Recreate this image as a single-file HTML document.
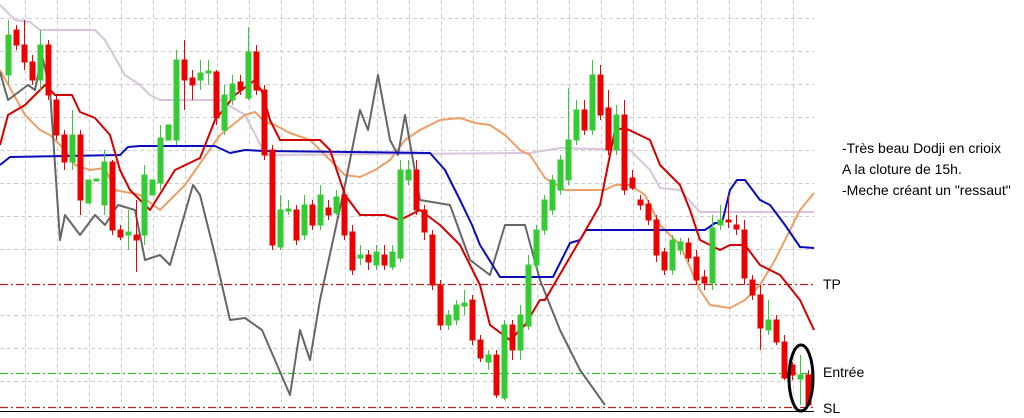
<!DOCTYPE html>
<html><head><meta charset="utf-8"><style>
html,body{margin:0;padding:0;background:#fff;width:1024px;height:418px;overflow:hidden}
svg{display:block}
text{font-family:"Liberation Sans",sans-serif;font-size:14px;fill:#000}
</style></head><body>
<svg width="1024" height="418" viewBox="0 0 1024 418" xmlns="http://www.w3.org/2000/svg">
<g stroke="#cfcfcf" stroke-width="1" stroke-dasharray="4,3">
<path d="M25.5 0V410M57.5 0V410M89.5 0V410M121.5 0V410M153.5 0V410M185.5 0V410M217.5 0V410M249.5 0V410M281.5 0V410M313.5 0V410M345.5 0V410M377.5 0V410M409.5 0V410M441.5 0V410M473.5 0V410M505.5 0V410M537.5 0V410M569.5 0V410M601.5 0V410M633.5 0V410M665.5 0V410M697.5 0V410M729.5 0V410M761.5 0V410M793.5 0V410"/>
<path d="M0 18.5H814M0 51.5H814M0 84.5H814M0 117.5H814M0 150.5H814M0 183.5H814M0 216.5H814M0 249.5H814M0 315.5H814M0 348.5H814M0 381.5H814"/>
</g>
<g stroke-dasharray="8,3,2,3" stroke-width="1.2">
<path d="M0 284.5H814" stroke="#b22"/>
<path d="M0 373.5H814" stroke="#3b3"/>
<path d="M0 407.5H814" stroke="#b22"/>
</g>
<path d="M0 411.5H814" stroke="#000" stroke-width="1"/>
<g fill="none" stroke-width="2" stroke-linejoin="round">
<polyline stroke="#d8c4dc" points="0,5 15,20 30,22 40,30 95,30 105,40 125,75 140,85 150,95 160,100 220,100 245,115 258,140 265,155 530,153 560,148 630,150 650,170 660,188 680,190 700,212 814,212"/>
<polyline stroke="#ee9f68" points="0,70 25,115 40,130 50,135 65,150 75,165 90,170 105,168 115,190 140,195 160,210 185,185 220,135 245,115 255,112 265,122 275,125 290,133 310,140 330,160 345,175 360,177 375,170 390,160 405,140 420,130 440,120 460,118 475,123 490,125 505,135 520,150 530,155 545,178 565,190 605,190 615,185 630,185 645,195 660,225 680,245 700,290 710,305 730,308 745,300 760,285 775,260 785,240 800,210 814,193"/>
<polyline stroke="#666" points="0,72 8,100 28,85 35,90 42,55 50,90 60,240 65,215 80,235 95,215 105,225 118,205 135,210 145,260 160,255 170,265 193,185 200,195 215,255 230,320 245,318 262,330 290,395 300,330 310,360 320,300 345,185 360,110 368,130 378,75 390,140 398,155 405,115 420,200 450,205 470,260 490,275 505,225 525,225 540,280 560,330 580,370 605,405"/>
<polyline stroke="#0b0bbb" points="0,165 10,157 120,155 128,147 140,146 215,146 230,153 245,150 265,151 430,153 445,170 460,200 472,225 480,245 500,277 553,277 570,243 580,240 586,230 705,230 715,223 722,223 730,190 737,180 745,180 760,200 770,205 785,225 800,247 814,248"/>
<polyline stroke="#d40000" points="0,145 8,115 25,105 45,85 55,95 72,95 80,112 95,118 110,135 120,170 130,190 150,210 175,170 200,158 215,120 235,95 255,80 262,92 270,120 280,140 320,140 330,150 345,195 360,215 385,215 400,220 420,210 440,225 460,245 480,285 490,325 510,340 525,325 540,300 545,300 580,240 600,205 615,130 625,128 650,140 660,165 680,185 690,210 700,240 720,250 730,245 745,245 760,265 780,275 800,300 814,330"/>
</g>
<g stroke-width="1">
<g stroke="#3c3" fill="#3c3">
<path d="M8.5 20V85M72.5 110V170M40.5 30V90M104.5 150V215M128.5 210V250M144.5 165V245M160.5 125V190M176.5 50V145M200.5 60V90M208.5 60V85M224.5 85V135M232.5 75V105M248.5 27V100M280.5 195V250M288.5 200V215M304.5 195V240M320.5 185V230M336.5 190V215M360.5 245V265M376.5 245V270M392.5 245V270M400.5 160V262M408.5 160V185M448.5 310V330M456.5 300V325M464.5 290V315M488.5 350V370M504.5 320V400M520.5 305V360M528.5 255V330M536.5 225V270M544.5 195V235M552.5 175V215M560.5 155V195M568.5 88V185M576.5 100V145M592.5 60V135M616.5 105V155M672.5 235V275M680.5 238V255M712.5 215V290M720.5 205V230M768.5 300V335M800.5 355V405"/>
<rect x="6" y="35" width="5" height="40"/><rect x="70" y="135" width="5" height="27"/><rect x="38" y="45" width="5" height="35"/><rect x="86" y="180" width="5" height="23"/><rect x="94" y="179" width="5" height="2"/><rect x="102" y="162" width="5" height="43"/><rect x="126" y="232" width="5" height="3"/><rect x="142" y="175" width="5" height="60"/><rect x="150" y="180" width="5" height="15"/><rect x="158" y="138" width="5" height="45"/><rect x="166" y="125" width="5" height="15"/><rect x="174" y="60" width="5" height="80"/><rect x="198" y="73" width="5" height="7"/><rect x="206" y="71" width="5" height="2"/><rect x="222" y="95" width="5" height="35"/><rect x="230" y="84" width="5" height="16"/><rect x="246" y="52" width="5" height="46"/><rect x="278" y="210" width="5" height="37"/><rect x="286" y="209" width="5" height="2"/><rect x="302" y="205" width="5" height="30"/><rect x="318" y="195" width="5" height="30"/><rect x="334" y="197" width="5" height="16"/><rect x="358" y="255" width="5" height="3"/><rect x="374" y="252" width="5" height="13"/><rect x="390" y="252" width="5" height="15"/><rect x="398" y="170" width="5" height="88"/><rect x="406" y="170" width="5" height="10"/><rect x="446" y="315" width="5" height="10"/><rect x="454" y="305" width="5" height="15"/><rect x="462" y="303" width="5" height="3"/><rect x="486" y="355" width="5" height="7"/><rect x="502" y="325" width="5" height="73"/><rect x="518" y="315" width="5" height="35"/><rect x="526" y="265" width="5" height="61"/><rect x="534" y="230" width="5" height="35"/><rect x="542" y="200" width="5" height="30"/><rect x="550" y="180" width="5" height="30"/><rect x="558" y="160" width="5" height="30"/><rect x="566" y="140" width="5" height="40"/><rect x="574" y="110" width="5" height="30"/><rect x="590" y="75" width="5" height="55"/><rect x="614" y="115" width="5" height="35"/><rect x="670" y="240" width="5" height="30"/><rect x="678" y="242" width="5" height="8"/><rect x="710" y="228" width="5" height="55"/><rect x="718" y="220" width="5" height="5"/><rect x="766" y="320" width="5" height="10"/><rect x="798" y="375" width="5" height="4"/>
</g>
<g stroke="#e00" fill="#e00">
<path d="M16.5 25V50M24.5 20V70M32.5 55V85M48.5 40V100M56.5 95V140M64.5 130V170M80.5 130V215M112.5 160V235M120.5 225V240M136.5 200V272M184.5 40V110M192.5 70V100M216.5 70V125M240.5 75V95M256.5 45V95M264.5 85V160M272.5 145V250M296.5 205V245M312.5 200V230M328.5 200V220M344.5 190V240M352.5 225V275M368.5 250V270M384.5 245V270M416.5 160V215M424.5 205V240M432.5 230V290M440.5 280V330M472.5 295V345M480.5 335V362M496.5 350V398M512.5 320V360M584.5 100V135M600.5 65V120M608.5 90V155M624.5 100V195M632.5 170V190M640.5 195V210M648.5 200V225M656.5 215V262M664.5 248V275M688.5 238V262M696.5 250V285M704.5 270V290M728.5 195V228M736.5 215V235M744.5 220V285M752.5 275V300M760.5 285V350M776.5 315V345M784.5 335V380M792.5 362V380M808.5 370V405"/>
<rect x="14" y="30" width="5" height="15"/><rect x="22" y="45" width="5" height="17"/><rect x="30" y="62" width="5" height="18"/><rect x="46" y="45" width="5" height="50"/><rect x="54" y="100" width="5" height="35"/><rect x="62" y="135" width="5" height="27"/><rect x="78" y="135" width="5" height="65"/><rect x="110" y="162" width="5" height="68"/><rect x="118" y="230" width="5" height="7"/><rect x="134" y="235" width="5" height="5"/><rect x="182" y="60" width="5" height="20"/><rect x="190" y="78" width="5" height="7"/><rect x="214" y="72" width="5" height="46"/><rect x="238" y="82" width="5" height="8"/><rect x="254" y="52" width="5" height="38"/><rect x="262" y="90" width="5" height="65"/><rect x="270" y="150" width="5" height="95"/><rect x="294" y="210" width="5" height="30"/><rect x="310" y="205" width="5" height="20"/><rect x="326" y="208" width="5" height="7"/><rect x="342" y="195" width="5" height="40"/><rect x="350" y="232" width="5" height="38"/><rect x="366" y="255" width="5" height="7"/><rect x="382" y="255" width="5" height="10"/><rect x="414" y="170" width="5" height="40"/><rect x="422" y="210" width="5" height="22"/><rect x="430" y="235" width="5" height="50"/><rect x="438" y="285" width="5" height="40"/><rect x="470" y="300" width="5" height="40"/><rect x="478" y="340" width="5" height="18"/><rect x="494" y="355" width="5" height="40"/><rect x="510" y="325" width="5" height="25"/><rect x="582" y="110" width="5" height="20"/><rect x="598" y="75" width="5" height="40"/><rect x="606" y="108" width="5" height="42"/><rect x="622" y="115" width="5" height="75"/><rect x="630" y="178" width="5" height="10"/><rect x="638" y="200" width="5" height="5"/><rect x="646" y="204" width="5" height="16"/><rect x="654" y="220" width="5" height="35"/><rect x="662" y="252" width="5" height="18"/><rect x="686" y="243" width="5" height="15"/><rect x="694" y="257" width="5" height="23"/><rect x="702" y="277" width="5" height="6"/><rect x="726" y="220" width="5" height="2"/><rect x="734" y="225" width="5" height="4"/><rect x="742" y="230" width="5" height="48"/><rect x="750" y="280" width="5" height="15"/><rect x="758" y="295" width="5" height="33"/><rect x="774" y="320" width="5" height="22"/><rect x="782" y="342" width="5" height="36"/><rect x="790" y="365" width="5" height="10"/><rect x="806" y="375" width="5" height="30"/>
</g>
</g>
<ellipse cx="801" cy="378" rx="12" ry="33" fill="none" stroke="#000" stroke-width="3"/>
<text x="842" y="153">-Très beau Dodji en crioix</text>
<text x="842" y="174">A la cloture de 15h.</text>
<text x="842" y="195">-Meche créant un "ressaut"</text>
<text x="823" y="289">TP</text>
<text x="823" y="377">Entrée</text>
<text x="823" y="413">SL</text>
</svg>
</body></html>
